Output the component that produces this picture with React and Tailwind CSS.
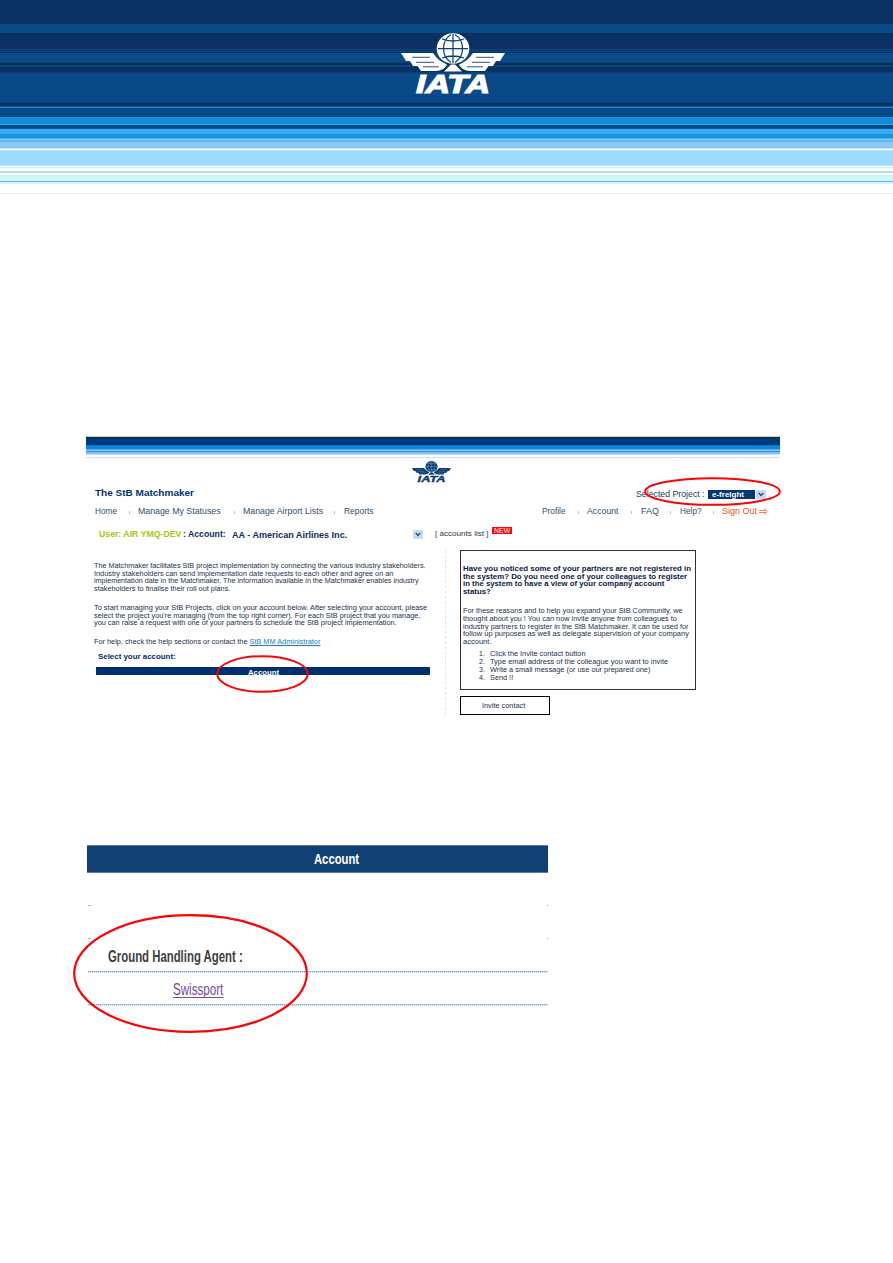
import React, { useLayoutEffect, useRef } from "react";

// Single line of text stretched horizontally to an exact width.
function Fit({ w, children, className = "", inner = "" }) {
  const ref = useRef(null);
  useLayoutEffect(() => {
    const el = ref.current;
    el.style.transform = `scaleX(${w / el.offsetWidth})`;
  }, [w]);
  return (
    <span className={"block shrink-0 whitespace-nowrap " + className} style={{ width: w }}>
      <span ref={ref} className={"inline-block origin-left align-top " + inner}>{children}</span>
    </span>
  );
}

const BANNER = [
  [24, "#0a3161"], [9, "#0a4a88"], [16, "#0a3162"], [1, "#0a4580"], [1, "#0a3568"], [1, "#0a4a88"], [1, "#083060"],
  [9, "#0a4a87"], [1, "#0a3d73"], [2, "#083060"], [2, "#0b427a"], [5, "#0a3162"], [1, "#0a4177"], [29, "#0a4987"],
  [1, "#0a3d73"], [3, "#083265"], [1, "#0a5ca0"], [1, "#1b80d0"], [9, "#084986"], [7, "#148cdc"], [1, "#3aa5ea"],
  [1, "#0a4a80"], [2, "#0a4886"], [1, "#0d5a9e"], [5, "#38aaf6"], [3, "#1c90e5"], [1, "#1b98e0"], [1, "#42aeea"],
  [1, "#84d0f8"], [2, "#66b4f0"], [6, "#8ac8fc"], [1, "#c4e8fc"], [1, "#ffffff"], [1, "#b8e4fa"], [14, "#9edcff"],
  [1, "#c4e8f8"], [1, "#ffffff"], [1, "#d4f0fa"], [3, "#ffffff"], [2, "#aadcf6"], [2, "#ffffff"], [6, "#ccf5fc"],
  [1, "#6cb8d4"], [2, "#ccfafa"], [9, "#ffffff"], [1, "#dcf4f8"],
];
const STRIP = [
  [3, "#fffff0"], [1, "#d8d4bc"], [1, "#00285c"], [7, "#003878"], [1, "#0874c4"], [3, "#0a88dc"], [1, "#58a8ec"],
  [1, "#98c4f4"], [1, "#3090dc"], [2, "#8cbcf4"], [1, "#b8e0f8"], [1, "#ffffff"],
  [1, "#ffffff"], [1, "#c8e4f4"],
];

function Stripes({ rows }) {
  return rows.map(([h, c], i) => <div key={i} style={{ height: h, backgroundColor: c }} />);
}

function Logo({ className, fg, bg }) {
  return (
    <svg viewBox="0 0 104 62" className={"overflow-visible " + className} preserveAspectRatio="none">
      <g fill={fg}>
        <path d="M0 20H32Q37 28 46 31.500Q43 38 35 38H20L16.500 33H12L9 28H5Z" />
        <path d="M104 20H72Q67 28 58 31.500Q61 38 69 38H84L87.500 33H92L95 28H99Z" />
        <ellipse cx="52" cy="15.500" rx="16.300" ry="15.300" />
      </g>
      <g stroke={bg} fill="none">
        <path d="M11 24.300H29M15 29.300H33M22 33.800H38M93 24.300H75M89 29.300H71M82 33.800H66" strokeWidth=".9" />
        <path d="M52 1V30M37 15.500H67M41 6Q52 10 63 6M41 25Q52 21 63 25M50 1.500C40 8 40 23 50 29.500M54 1.500C64 8 64 23 54 29.500" strokeWidth="1.250" />
      </g>
      <path d="M43 38.500L50 31.500H54L61 38.500Z" fill={fg} />
      <text x="15" y="60" textLength="74" lengthAdjust="spacingAndGlyphs" fontSize="26" fontWeight="700" fontStyle="italic" fontFamily="'Liberation Sans', Arial, sans-serif" fill={fg} stroke={fg} strokeWidth="1.200">IATA</text>
    </svg>
  );
}

function Ring({ className, w, h, sw = 2 }) {
  return (
    <svg className={"absolute " + className} width={w} height={h}>
      <ellipse cx={w / 2} cy={h / 2} rx={w / 2 - 1.2} ry={h / 2 - 1.2} fill="none" stroke="#fa0505" strokeWidth={sw} />
    </svg>
  );
}

function Chevron() {
  return (
    <span className="flex h-[9px] w-[10px] items-center justify-center rounded-[1px] bg-[#c4dcfc]">
      <svg width="6" height="5" viewBox="0 0 6 5"><path d="M.7 1L3 3.500L5.300 1" fill="none" stroke="#34506e" strokeWidth="1.500" /></svg>
    </span>
  );
}

const Sep = ({ className }) => <span className={"mt-[2px] h-[3px] w-px shrink-0 bg-[#b4c6d8] " + className} />;

function Lines({ rows, className }) {
  return <div className={className}>{rows.map(([w, t]) => <Fit key={t} w={w}>{t}</Fit>)}</div>;
}

const steps = [
  [95, "Click the Invite contact button"],
  [178, "Type email address of the colleague you want to invite"],
  [160, "Write a small message (or use our prepared one)"],
  [23, "Send !!"],
];

const DOTS = "h-px bg-[repeating-linear-gradient(90deg,#78a9cf_0_1px,#c9deef_1px_2px)]";

export default function App() {
  return (
    <div className="relative h-[1263px] w-[893px] overflow-hidden bg-white font-['Liberation_Sans',Arial,sans-serif] text-[#1c3050]">
      <header className="relative h-[194px]">
        <Stripes rows={BANNER} />
        <Logo className="absolute left-[401px] top-[33px] h-[62px] w-[104px]" fg="#ffffff" bg="#0a4280" />
      </header>

      <section className="relative ml-[86px] mt-[239px] h-[283px] w-[694px]">
        <Stripes rows={STRIP} />
        <div className="flex h-[28px] justify-center pt-[3px]">
          <Logo className="mr-[4px] h-[22px] w-[39px]" fg="#0a3d78" bg="#7fa3c6" />
        </div>

        <div className="flex h-[14px] items-center justify-between pl-[9px] pr-[14px]">
          <Fit w={99} className="text-[9.5px] font-bold leading-[14px] text-[#003070]">The StB Matchmaker</Fit>
          <div className="flex items-center pt-[2px]">
            <Fit w={69} className="text-[9px] leading-[12px] text-[#243c5c]">Selected Project :</Fit>
            <div className="ml-[3px] flex h-[9px] w-[47px] items-center bg-[#003878] pl-[4px]">
              <Fit w={32} className="text-[7px] font-bold leading-[9px] text-white">e-freight</Fit>
            </div>
            <span className="ml-px"><Chevron /></span>
          </div>
        </div>

        <nav className="mt-[4px] flex h-[14px] items-center pl-[9px] text-[9px] leading-[14px] text-[#315070]">
          <Fit w={22}>Home</Fit><Sep className="ml-[12px] mr-[8px]" />
          <Fit w={83}>Manage My Statuses</Fit><Sep className="ml-[13px] mr-[8px]" />
          <Fit w={80}>Manage Airport Lists</Fit><Sep className="ml-[11px] mr-[9px]" />
          <Fit w={30}>Reports</Fit>
          <Fit w={24} className="ml-[168px]">Profile</Fit><Sep className="ml-[12px] mr-[8px]" />
          <Fit w={32}>Account</Fit><Sep className="ml-[12px] mr-[9px]" />
          <Fit w={18}>FAQ</Fit><Sep className="ml-[11px] mr-[9px]" />
          <Fit w={22}>Help?</Fit><Sep className="ml-[11px] mr-[8px]" />
          <Fit w={35} className="text-[#f05020]">Sign Out</Fit>
          <svg className="ml-[2px]" width="9" height="7" viewBox="0 0 9 7"><path d="M0 2.500H7M0 4.500H7M5 .5L8.300 3.500L5 6.500" fill="none" stroke="#e86850" strokeWidth=".8" /></svg>
        </nav>

        <div className="mt-[9px] flex h-[14px] items-center pl-[13px] text-[8.5px] font-bold leading-[14px] text-[#0a2e62]">
          <Fit w={82} className="text-[#a8c808]">User: AIR YMQ-DEV</Fit>
          <Fit w={43} className="ml-[2px]">: Account:</Fit>
          <Fit w={115} className="ml-[6px] pt-px">AA - American Airlines Inc.</Fit>
          <span className="ml-[66px] pt-px"><Chevron /></span>
          <Fit w={54} className="ml-[12px] text-[7.5px] font-normal text-[#2a3c50]">[ accounts list ]</Fit>
          <div className="mb-[7px] ml-[3px] flex h-[7px] w-[20px] items-center justify-center bg-[#fc0404]">
            <Fit w={16} className="text-[6.5px] font-normal leading-[7px] text-white">NEW</Fit>
          </div>
        </div>

        <div className="mt-[9px] flex">
          <div className="w-[360px] border-r border-dashed border-[#dbe7f2] pb-[39px] pl-[8px] pt-[12px] text-[7px] leading-[7.5px]">
            <Lines rows={[
              [332, "The Matchmaker facilitates StB project implementation by connecting the various industry stakeholders."],
              [299, "Industry stakeholders can send implementation date requests to each other and agree on an"],
              [325, "implementation date in the Matchmaker. The information available in the Matchmaker enables industry"],
              [136, "stakeholders to finalise their roll out plans."],
            ]} />
            <Lines className="mt-[12px]" rows={[
              [333, "To start managing your StB Projects, click on your account below. After selecting your account, please"],
              [326, "select the project you're managing (from the top right corner). For each StB project that you manage,"],
              [303, "you can raise a request with one of your partners to schedule the StB project implementation."],
            ]} />
            <Fit w={226} className="mt-[11px]">For help, check the help sections or contact the <span className="text-[#187ccc] underline">StB MM Administrator</span></Fit>
            <Fit w={78} className="ml-[4px] mt-[7px] text-[8px] font-bold leading-[10px] text-[#002e6c]">Select your account:</Fit>
            <div className="ml-[2px] mt-[5px] flex h-[8px] w-[334px] justify-center overflow-hidden bg-[#003070] pt-[1.500px]">
              <Fit w={31} className="text-[7px] font-bold leading-[8px] text-white">Account</Fit>
            </div>
          </div>

          <div className="ml-[14px]">
            <div className="h-[140px] w-[236px] border border-[#303030] pl-[2px] pt-[14px] text-[7px] leading-[7.6px]">
              <Lines className="font-bold text-[#0a2048]" rows={[
                [228, "Have you noticed some of your partners are not registered in"],
                [224, "the system? Do you need one of your colleagues to register"],
                [201, "in the system to have a view of your company account"],
                [28, "status?"],
              ]} />
              <Lines className="mt-[12px]" rows={[
                [220, "For these reasons and to help you expand your StB Community, we"],
                [214, "thought about you ! You can now invite anyone from colleagues to"],
                [226, "industry partners to register in the StB Matchmaker. It can be used for"],
                [226, "follow up purposes as well as delegate supervision of your company"],
                [28, "account."],
              ]} />
              <ol className="ml-[16px] mt-[5px] leading-[8px]">
                {steps.map(([w, t], i) => (
                  <li key={t} className="flex"><Fit w={6}>{i + 1}.</Fit><Fit w={w} className="ml-[5px]">{t}</Fit></li>
                ))}
              </ol>
            </div>
            <div className="mt-[6px] flex h-[19px] w-[90px] items-center border border-black pl-[21px] text-[7px] leading-[8px]">
              <Fit w={43}>Invite contact</Fit>
            </div>
          </div>
        </div>
      </section>

      <section className="ml-[87px] mt-[129px] w-[461px]">
        <div className="flex h-[28px] items-center justify-center border-y border-[#5a7ea4] bg-[#114072] pl-[38px]">
          <Fit w={45} className="text-[15px] font-bold leading-[26px] text-white">Account</Fit>
        </div>
        <div className="flex h-[33px] items-end justify-between"><div className={DOTS + " ml-px w-[3px]"} /><div className={DOTS + " w-px"} /></div>
        <div className="flex h-[33px] items-end justify-between"><div className={DOTS + " ml-px w-[3px]"} /><div className={DOTS + " w-px"} /></div>
        <div className="flex h-[32px] items-center pl-[20.500px] pt-[4px]">
          <Fit w={135} className="text-[16px] font-bold leading-[20px] text-[#404040]">Ground Handling Agent :</Fit>
        </div>
        <div className={DOTS + " ml-px"} /><div className={DOTS + " ml-px opacity-50"} />
        <div className="flex h-[31px] items-center pl-[86px] pt-[2px]">
          <Fit w={50} className="text-[16px] leading-[20px] text-[#7c48a0]" inner="underline decoration-1 underline-offset-2 [text-decoration-skip-ink:none]">Swissport</Fit>
        </div>
        <div className={DOTS + " ml-px"} /><div className={DOTS + " ml-px opacity-50"} />
      </section>

      <Ring className="left-[644px] top-[477px]" w={137} h={29} />
      <Ring className="left-[216px] top-[655px]" w={93} h={38} />
      <Ring className="left-[73px] top-[914px]" w={235} h={119} sw={2.2} />
    </div>
  );
}
